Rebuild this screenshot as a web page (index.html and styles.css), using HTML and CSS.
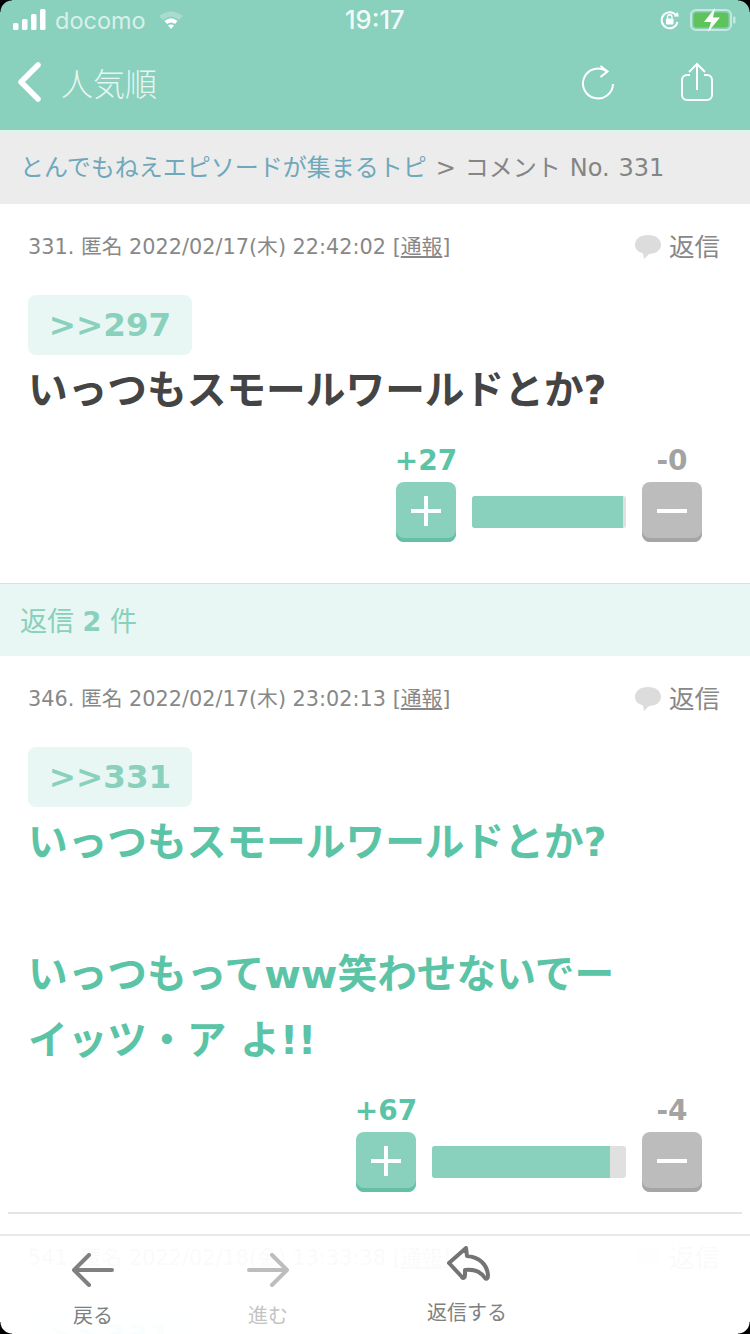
FILE: index.html
```html
<!DOCTYPE html>
<html lang="ja">
<head>
<meta charset="utf-8">
<title>コメント No. 331</title>
<link rel="stylesheet" href="styles.css">
</head>
<body>
<div class="screen">
  <header class="top">
    <div class="status">
      <div class="status-left">
        <svg class="signal" width="34" height="22" viewBox="0 0 34 22"><rect x="0" y="14" width="5.5" height="7" rx="1.5"/><rect x="9" y="10" width="5.5" height="11" rx="1.5"/><rect x="18" y="5" width="5.5" height="16" rx="1.5"/><rect x="27" y="0" width="5.5" height="21" rx="1.5"/></svg>
        <span class="carrier">docomo</span>
        <svg class="wifi" width="26" height="22" viewBox="0 0 26 22"><path class="wifi-faint" d="M1 7 Q13 -2 25 7 L21 11 Q13 4 5 11Z"/><path d="M6.5 12 Q13 6.500 19.500 12 L17 15 Q13 12 9 15Z"/><path d="M10 16.500 Q13 14.500 16 16.500 L13 20Z"/></svg>
      </div>
      <div class="clock">19:17</div>
      <div class="status-right">
        <svg class="lock" width="20" height="20" viewBox="0 0 20 20"><path d="M16.500 6 A8 8 0 1 0 17.500 12" fill="none" stroke="#fff" stroke-width="2"/><path d="M14 6.500 L19 6.500 L17.500 2Z" fill="#fff"/><rect x="6" y="8.500" width="7.500" height="6" rx="1" fill="#fff"/><path d="M7.500 8.500 V7 a2.200 2.200 0 0 1 4.500 0 V8.500" fill="none" stroke="#fff" stroke-width="1.300"/></svg>
        <svg class="battery" width="46" height="24" viewBox="0 0 46 24"><rect x="1" y="2" width="40" height="20" rx="5" fill="none" stroke="#c4e8dd" stroke-width="2"/><rect x="3.500" y="4.500" width="35" height="15" rx="3" fill="#5fc25a"/><rect x="43" y="8.500" width="2.500" height="7" rx="1" fill="#c4e8dd"/><path d="M25 0 L14 14 H21 L18 24 L30 9.500 H23Z" fill="#fff"/></svg>
      </div>
    </div>
    <nav class="nav">
      <div class="nav-left">
        <svg class="chev" width="26" height="40" viewBox="0 0 26 40"><path d="M22 3 L5 20 L22 37" fill="none" stroke="#fff" stroke-width="5.500" stroke-linecap="round" stroke-linejoin="round"/></svg>
        <span class="nav-title">人気順</span>
      </div>
      <div class="nav-right">
        <svg class="reload" width="36" height="38" viewBox="0 0 36 38"><path d="M27 8.500 A15 15 0 1 0 33 21" fill="none" stroke="#fff" stroke-width="2"/><path d="M20.500 3 L27.500 8.500 L20.500 14" fill="none" stroke="#fff" stroke-width="2"/></svg>
        <svg class="share" width="34" height="40" viewBox="0 0 34 40"><path d="M10 13 H7 a5 5 0 0 0 -5 5 V33 a5 5 0 0 0 5 5 H27 a5 5 0 0 0 5 -5 V18 a5 5 0 0 0 -5 -5 H24" fill="none" stroke="#fff" stroke-width="2"/><path d="M17 28 V2 M9 10 L17 2 L25 10" fill="none" stroke="#fff" stroke-width="2"/></svg>
      </div>
    </nav>
  </header>

  <div class="crumb"><span class="crumb-link">とんでもねえエピソードが集まるトピ</span> &gt; コメント No. 331</div>

  <article class="comment comment-first">
    <div class="meta-row">
      <div class="meta">331. 匿名 2022/02/17(木) 22:42:02 [<u>通報</u>]</div>
      <div class="reply">
        <svg class="bubble" width="26" height="24" viewBox="0 0 26 24"><path d="M13 0 C21 0 26 4 26 10 C26 15 21 19 14 19 L9 24 L8 18.500 C3 17 0 14 0 10 C0 4 5 0 13 0Z"/></svg>
        <span>返信</span>
      </div>
    </div>
    <div class="chip">&gt;&gt;297</div>
    <p class="body">いっつもスモールワールドとか?</p>
    <div class="vote">
      <div class="vote-col">
        <div class="count count-plus">+27</div>
        <div class="btn btn-plus"></div>
      </div>
      <div class="bar bar-short"><div class="fill" style="width:98%"></div></div>
      <div class="vote-col">
        <div class="count count-minus">-0</div>
        <div class="btn btn-minus"></div>
      </div>
    </div>
  </article>

  <div class="replies">返信 <b>2</b> 件</div>

  <article class="comment comment-second">
    <div class="meta-row">
      <div class="meta">346. 匿名 2022/02/17(木) 23:02:13 [<u>通報</u>]</div>
      <div class="reply">
        <svg class="bubble" width="26" height="24" viewBox="0 0 26 24"><path d="M13 0 C21 0 26 4 26 10 C26 15 21 19 14 19 L9 24 L8 18.500 C3 17 0 14 0 10 C0 4 5 0 13 0Z"/></svg>
        <span>返信</span>
      </div>
    </div>
    <div class="chip">&gt;&gt;331</div>
    <p class="body body-green">いっつもスモールワールドとか?<br><br>いっつもってww笑わせないでー<br>イッツ・ア よ!!</p>
    <div class="vote">
      <div class="vote-col">
        <div class="count count-plus">+67</div>
        <div class="btn btn-plus"></div>
      </div>
      <div class="bar bar-long"><div class="fill" style="width:92%"></div></div>
      <div class="vote-col">
        <div class="count count-minus">-4</div>
        <div class="btn btn-minus"></div>
      </div>
    </div>
  </article>
  <div class="rule"></div>

  <article class="comment">
    <div class="meta-row">
      <div class="meta">541. 匿名 2022/02/18(金) 13:33:38 [<u>通報</u>]</div>
      <div class="reply">
        <svg class="bubble" width="26" height="24" viewBox="0 0 26 24"><path d="M13 0 C21 0 26 4 26 10 C26 15 21 19 14 19 L9 24 L8 18.500 C3 17 0 14 0 10 C0 4 5 0 13 0Z"/></svg>
        <span>返信</span>
      </div>
    </div>
    <div class="chip">&gt;&gt;331</div>
  </article>

  <footer class="tabs">
    <div class="tab tab-back">
      <svg width="42" height="34" viewBox="0 0 42 34"><path d="M40 17 H3 M17 2 L2 17 L17 32" fill="none" stroke="#808080" stroke-width="4" stroke-linecap="round" stroke-linejoin="round"/></svg>
      <span>戻る</span>
    </div>
    <div class="tab tab-forward">
      <svg width="42" height="34" viewBox="0 0 42 34"><path d="M2 17 H39 M25 2 L40 17 L25 32" fill="none" stroke="#bdbdbd" stroke-width="4" stroke-linecap="round" stroke-linejoin="round"/></svg>
      <span>進む</span>
    </div>
    <div class="tab tab-reply">
      <svg width="44" height="36" viewBox="0 0 44 36"><path d="M20 2 L3 17 L16 31 C17 33 19 32 19 29 L19 24 C28 23 35 26 39 32 C41 34 42 32 42 29 C41 18 33 11 21 10Z" fill="#fff" stroke="#747474" stroke-width="4" stroke-linejoin="round"/></svg>
      <span>返信する</span>
    </div>
  </footer>

  <i class="corner corner-tl"></i>
  <i class="corner corner-tr"></i>
  <i class="corner corner-bl"></i>
  <i class="corner corner-br"></i>
</div>
</body>
</html>
```
FILE: styles.css
```css
* { box-sizing: border-box; }
html, body { margin: 0; padding: 0; background: #fff; }
body { font-family: "DejaVu Sans", "Noto Sans CJK JP", sans-serif; }
.screen { position: relative; width: 750px; height: 1334px; overflow: hidden; background: #fff; }

.top { background: #89d0bd; height: 130px; color: #fff; }
.status { height: 40px; display: flex; align-items: center; justify-content: space-between; padding: 0 14px 0 13px; position: relative; }
.status-left { display: flex; align-items: center; gap: 8px; }
.signal { fill: #fff; }
.carrier { font-family: Inter, "Liberation Sans", sans-serif; font-size: 23.5px; color: #d8f0e9; }
.wifi { fill: #fff; margin-left: 4px; }
.wifi-faint { fill: #aadccd; }
.clock { font-family: Inter, "Liberation Sans", sans-serif; font-size: 25.5px; font-weight: 500; line-height: 40px; color: #f2fbf8; position: absolute; left: 345px; top: 0; }
.status-right { display: flex; align-items: center; gap: 10px; }
.nav { height: 90px; display: flex; align-items: center; justify-content: space-between; padding: 0 36px 6px 16px; }
.nav-left { display: flex; align-items: center; gap: 19px; }
.nav-title { font-family: "Noto Sans CJK JP", sans-serif; font-size: 32px; font-weight: 300; color: #e6f6f1; }
.nav-right { display: flex; align-items: center; gap: 64px; }

.crumb { height: 74px; border-top: 4px solid #e3f1ec; background: #ececec; padding-left: 20px; line-height: 68px; font-size: 24px; color: #858585; white-space: nowrap; word-spacing: 1.3px; }
.crumb-link { color: #6fa8bb; }

.comment { padding: 28px 30px 0 28px; }
.comment-first { height: 380px; border-bottom: 1px solid #ddd; }
.comment-second { height: 556px; }
.meta-row { height: 30px; display: flex; justify-content: space-between; align-items: center; }
.meta { font-size: 20.8px; line-height: 30px; color: #888; white-space: nowrap; }
.reply { display: flex; align-items: center; gap: 8px; font-size: 25.5px; line-height: 30px; color: #888; }
.bubble { fill: #dcdcdc; }
.chip { width: 164px; height: 60px; margin-top: 33px; background: #e8f7f3; border-radius: 8px; font-size: 32.500px; font-weight: 700; line-height: 60px; text-align: center; color: #89d0bd; }
.body { margin: 0; padding-top: 2px; font-size: 39.7px; font-weight: 700; line-height: 66px; color: #444; white-space: nowrap; }
.body-green { color: #5cc4a6; }

.vote { display: flex; justify-content: flex-end; align-items: flex-end; gap: 16px; margin-top: 17px; padding-right: 18px; }
.vote-col { width: 60px; display: flex; flex-direction: column; align-items: center; }
.count { font-size: 28px; font-weight: 700; line-height: 42px; height: 42px; white-space: nowrap; }
.count-plus { color: #5cc4a6; }
.count-minus { color: #a3a3a3; }
.btn { position: relative; width: 60px; height: 60px; border-radius: 8px; }
.btn-plus { background: #89d0bd; box-shadow: inset 0 -4px 0 #64bfa5; }
.btn-minus { background: #bcbcbc; box-shadow: inset 0 -4px 0 #a5a5a5; }
.btn::before { content: ""; position: absolute; left: 15px; top: 27px; width: 30px; height: 4px; background: #fff; }
.btn-plus::after { content: ""; position: absolute; left: 28px; top: 14px; width: 4px; height: 30px; background: #fff; }
.bar { height: 32px; margin-bottom: 14px; background: #e0e0e0; border-radius: 3px; overflow: hidden; }
.bar-short { width: 154px; }
.bar-long { width: 194px; }
.fill { height: 100%; background: #89d0bd; }

.replies { height: 72px; background: #e8f7f3; padding-left: 20px; font-size: 27px; line-height: 76px; color: #89d0bd; }
.replies b { font-weight: 700; }
.rule { height: 2px; margin: 0 8px 1px; background: #e4e4e4; }

.tabs { position: absolute; left: 0; right: 0; bottom: 0; height: 100px; display: grid; grid-template-columns: 186px 164px 234px; background: rgba(255, 255, 255, 0.96); border-top: 2px solid #e8e8e8; }
.tab { display: flex; flex-direction: column; align-items: center; font-size: 20px; color: #808080; }
.tab svg { flex: none; }
.tab span { font-family: "Noto Sans CJK JP", sans-serif; line-height: 30px; }
.tab-back, .tab-forward { padding-top: 17px; }
.tab-back span, .tab-forward span { margin-top: 13px; }
.tab-forward { color: #c4c4c4; }
.tab-reply { padding-top: 10px; padding-left: 2px; }
.tab-reply span { margin-top: 15px; margin-left: -2px; }

.corner { position: absolute; width: 12px; height: 12px; }
.corner-tl { left: 0; top: 0; background: radial-gradient(circle at 100% 100%, transparent 11px, #000 12px); }
.corner-tr { right: 0; top: 0; background: radial-gradient(circle at 0 100%, transparent 11px, #000 12px); }
.corner-bl { left: 0; bottom: 0; background: radial-gradient(circle at 100% 0, transparent 11px, #000 12px); }
.corner-br { right: 0; bottom: 0; background: radial-gradient(circle at 0 0, transparent 11px, #000 12px); }
```
